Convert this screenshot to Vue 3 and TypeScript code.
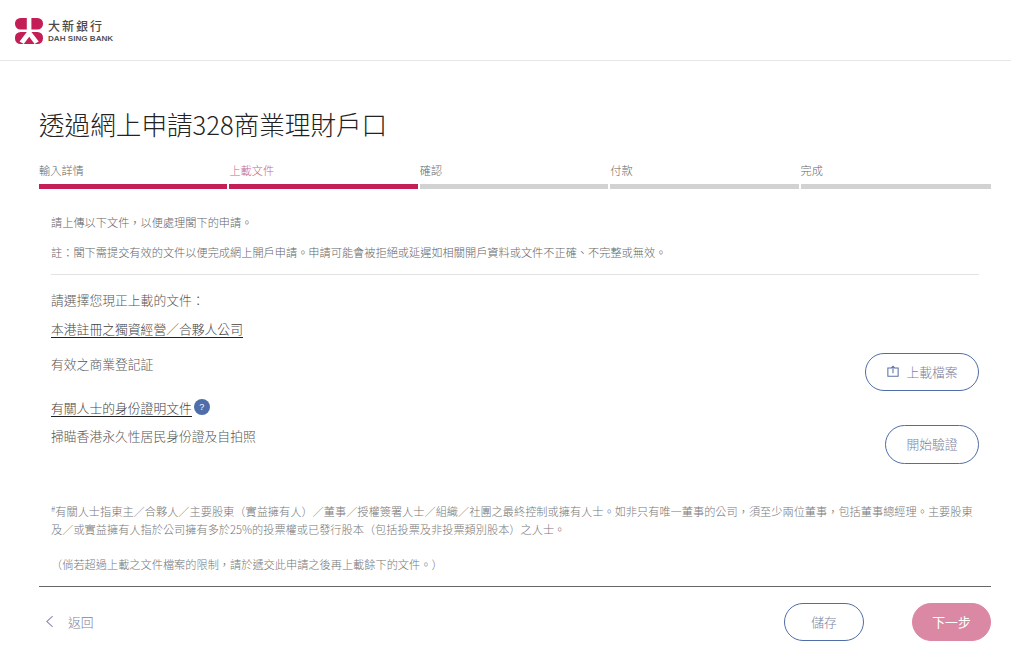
<script setup lang="ts">
const steps: { label: string; cls: string }[] = [
  { label: '輸入詳情', cls: 'done' },
  { label: '上載文件', cls: 'active' },
  { label: '確認', cls: '' },
  { label: '付款', cls: '' },
  { label: '完成', cls: '' },
]
</script>

<template>
  <div class="page">
    <header class="top">
      <svg class="mark" viewBox="0 0 28 26" width="28" height="26" aria-hidden="true">
        <rect x="0" y="0" width="28" height="11.500" rx="5.500" fill="#c41e56" />
        <rect x="0" y="14" width="28" height="12" rx="5.500" fill="#c41e56" />
        <path d="M11.800 0h4.600v14l7.400 9.500-4.200 2.500-5.400-7.200-5.400 7.200-4.200-2.500 7.200-9.500z" fill="#fff" />
      </svg>
      <div class="brand">
        <div class="zh">大新銀行</div>
        <div class="en">DAH SING BANK</div>
      </div>
    </header>

    <main class="main">
      <h1 class="title">透過網上申請328商業理財戶口</h1>

      <div class="steps">
        <div v-for="s in steps" :key="s.label" class="step" :class="s.cls">
          <span class="step-label">{{ s.label }}</span>
          <i class="bar"></i>
        </div>
      </div>

      <section class="body">
        <p class="note first">請上傳以下文件，以便處理閣下的申請。</p>
        <p class="note second">註：閣下需提交有效的文件以便完成網上開戶申請。申請可能會被拒絕或延遲如相關開戶資料或文件不正確、不完整或無效。</p>
        <hr class="rule" />

        <p class="lead">請選擇您現正上載的文件：</p>
        <p class="group"><span class="u">本港註冊之獨資經營／合夥人公司</span></p>

        <div class="row row-a">
          <span class="doc">有效之商業登記証</span>
          <button class="btn upload" type="button">
            <svg viewBox="0 0 14 14" width="12" height="12" fill="none" stroke="#5a6fa8" stroke-width="1.200" aria-hidden="true">
              <path d="M4.500 3.500H1v9.500h12V3.500H9.500" />
              <path d="M7 9.500V1.500M4.500 4 7 1.500 9.500 4" />
            </svg>
            上載檔案
          </button>
        </div>

        <p class="group group-b">
          <span class="u">有關人士的身份證明文件</span>
          <span class="help">?</span>
        </p>

        <div class="row row-b">
          <span class="doc">掃瞄香港永久性居民身份證及自拍照</span>
          <button class="btn verify" type="button">開始驗證</button>
        </div>

        <p class="foot">
          <span class="line"><sup>#</sup>有關人士指東主／合夥人／主要股東（實益擁有人）／董事／授權簽署人士／組織／社團之最終控制或擁有人士。如非只有唯一董事的公司，須至少兩位董事，包括董事總經理。主要股東</span>
          <span class="line">及／或實益擁有人指於公司擁有多於25%的投票權或已發行股本（包括投票及非投票類別股本）之人士。</span>
        </p>
        <p class="limit">（倘若超過上載之文件檔案的限制，請於遞交此申請之後再上載餘下的文件。）</p>
      </section>

      <footer class="actions">
        <a class="back">
          <svg viewBox="0 0 10 14" width="9" height="13" fill="none" stroke="#8f8fb8" stroke-width="1.200" aria-hidden="true">
            <path d="M8.500 1 2 7l6.500 6" />
          </svg>
          <span>返回</span>
        </a>
        <div class="right">
          <button class="btn save" type="button">儲存</button>
          <button class="btn next" type="button">下一步</button>
        </div>
      </footer>
    </main>
  </div>
</template>

<style>
html, body { background: #fff; }
</style>

<style scoped>
.page {
  width: 1011px;
  height: 660px;
  overflow: hidden;
  background: #fff;
  font-family: "Noto Sans CJK TC", "Noto Sans", sans-serif;
  font-weight: 300;
  color: #555;
}
p { margin: 0; }
.top {
  height: 61px;
  box-sizing: border-box;
  border-bottom: 1px solid #e6e6e6;
  padding: 18px 0 0 15px;
  display: flex;
  gap: 5px;
  align-items: flex-start;
}
.mark { flex: none; }
.brand { padding-top: 1px; color: #4a4a4a; }
.zh { font-size: 12px; line-height: 14px; letter-spacing: 2px; font-weight: 500; }
.en {
  font-family: "Liberation Sans", sans-serif;
  font-size: 8.100px;
  line-height: 11px;
  font-weight: 700;
  color: #555;
}
.main { padding: 0 20px 0 39px; }
.title {
  margin: 0;
  padding-top: 46px;
  height: 36px;
  font-size: 25.600px;
  line-height: 34px;
  font-weight: 300;
  color: #222;
}
.steps {
  display: grid;
  grid-template-columns: repeat(5, 1fr);
  margin-top: 19px;
}
.step { display: flex; flex-direction: column; padding-right: 2px; }
.step:last-child { padding-right: 0; }
.step-label { font-size: 11.200px; line-height: 16px; color: #666; }
.step.active .step-label { color: #c56a8c; }
.bar { display: block; height: 5px; margin-top: 6px; background: #d2d2d2; }
.step.done .bar, .step.active .bar { background: #c41e56; }

.body { padding: 0 12px; }
.note { font-size: 11.200px; line-height: 16px; color: #666; }
.first { margin-top: 25px; }
.second { margin-top: 14px; }
.rule { margin: 14px 0 0; border: 0; border-top: 1px solid #e2e2e2; }
.lead { margin-top: 16px; font-size: 12.800px; line-height: 18px; color: #555; }
.group { margin-top: 11px; font-size: 12.800px; line-height: 18px; color: #444; }
.u { display: inline-block; line-height: 17px; border-bottom: 1px solid #222; }
.row { display: flex; justify-content: space-between; align-items: flex-start; }
.row-a { margin-top: 15px; }
.row-b { margin-top: 8px; }
.doc { font-size: 12.800px; line-height: 18px; color: #555; }
.row-a .doc { padding-top: 2px; }
.row-b .doc { padding-top: 2px; }
.group-b { margin-top: 8px; display: flex; align-items: flex-start; gap: 2px; }
.help {
  width: 16px;
  height: 16px;
  border-radius: 50%;
  background: #4f6da8;
  color: #fff;
  font-family: "Liberation Sans", sans-serif;
  font-size: 9px;
  line-height: 16px;
  text-align: center;
}
.btn {
  box-sizing: border-box;
  height: 38px;
  border-radius: 19px;
  border: 1px solid #4f6da8;
  background: #fff;
  color: #7c7f9c;
  font: inherit;
  font-size: 12.800px;
  padding: 0 0 2px;
  display: inline-flex;
  align-items: center;
  justify-content: center;
}
.upload { width: 114px; gap: 7px; padding-left: 1px; }
.verify { width: 94px; height: 39px; border-radius: 20px; }
.foot { margin-top: 38px; font-size: 11.200px; line-height: 18px; color: #777; }
.line { display: block; white-space: nowrap; }
.foot sup { font-size: 8px; line-height: 0; vertical-align: 4px; }
.limit { margin-top: 17px; font-size: 11.200px; line-height: 18px; color: #777; }
.actions {
  margin-top: 13px;
  border-top: 1px solid #666;
  padding-top: 16px;
  display: flex;
  justify-content: space-between;
  align-items: flex-start;
}
.back {
  display: flex;
  align-items: center;
  gap: 14px;
  height: 37px;
  padding-left: 6px;
  font-size: 12.800px;
  color: #7c7f9c;
}
.right { display: flex; gap: 48px; }
.save { width: 80px; }
.next { width: 79px; background: #db88a5; border-color: #db88a5; color: #fff; font-weight: 400; }
</style>
